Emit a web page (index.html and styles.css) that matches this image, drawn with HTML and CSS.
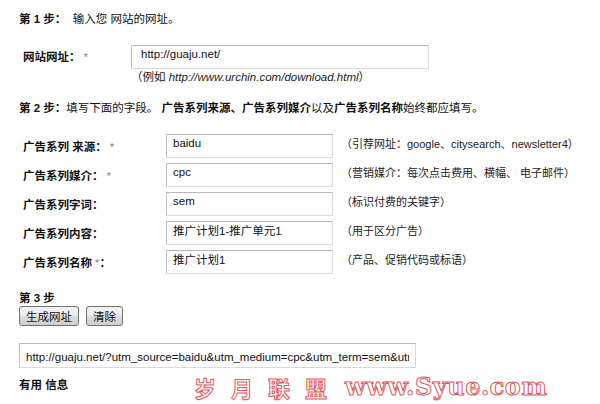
FILE: index.html
```html
<!DOCTYPE html>
<html lang="zh-CN">
<head>
  <meta charset="UTF-8">
  <title>网址构建工具</title>
  <link rel="stylesheet" href="styles.css">
</head>
<body>
  <div class="page">
    <!-- 第 1 步 -->
    <p class="step"><b>第 1 步：</b>&nbsp; 输入您 网站的网址。</p>

    <div class="url-row">
      <label class="label" for="site-url">网站网址：<span class="req">*</span></label>
      <input type="text" id="site-url" class="field url-field" value="http://guaju.net/">
      <span></span>
      <span class="example">（例如 <i>http://www.urchin.com/download.html</i>）</span>
    </div>

    <!-- 第 2 步 -->
    <p class="step step-2"><b>第 2 步：</b>填写下面的字段。 <b>广告系列来源、广告系列媒介</b>以及<b>广告系列名称</b>始终都应填写。</p>

    <div class="campaign">
      <label class="label">广告系列 来源：<span class="req">*</span></label>
      <input type="text" class="field" value="baidu">
      <span class="hint">（引荐网址：google、citysearch、newsletter4）</span>

      <label class="label">广告系列媒介：<span class="req">*</span></label>
      <input type="text" class="field" value="cpc">
      <span class="hint">（营销媒介：每次点击费用、横幅、 电子邮件）</span>

      <label class="label">广告系列字词：</label>
      <input type="text" class="field" value="sem">
      <span class="hint">（标识付费的关键字）</span>

      <label class="label">广告系列内容：</label>
      <input type="text" class="field" value="推广计划1-推广单元1">
      <span class="hint">（用于区分广告）</span>

      <label class="label">广告系列名称<span class="req">*</span>：</label>
      <input type="text" class="field" value="推广计划1">
      <span class="hint">（产品、促销代码或标语）</span>
    </div>

    <!-- 第 3 步 -->
    <p class="step step-3"><b>第 3 步</b></p>
    <div class="buttons">
      <button class="btn">生成网址</button>
      <button class="btn">清除</button>
    </div>

    <input type="text" class="field result" value="http://guaju.net/?utm_source=baidu&amp;utm_medium=cpc&amp;utm_term=sem&amp;utm_content=推广计划1-推广单元1&amp;utm_campaign=推广计划1">

    <p class="step info"><b>有用 信息</b></p>
  </div>

  <div class="watermark"><span class="wm-cn">岁 月 联 盟</span><span class="wm-en">www.Syue.com</span></div>
</body>
</html>
```

FILE: styles.css
```css
* {
  margin: 0;
  padding: 0;
  box-sizing: border-box;
}

html, body {
  height: 100%;
  overflow: hidden;
}

body {
  font-family: "Liberation Sans", Arial, "Noto Sans CJK SC", sans-serif;
  font-size: 11.5px;
  color: #111;
  background-color: #fff;
  position: relative;
}

.page {
  padding: 11px 19px 0;
}

.step {
  line-height: 16px;
  height: 16px;
  white-space: nowrap;
}

.step b {
  font-weight: bold;
}

.url-row {
  display: grid;
  grid-template-columns: 112px 298px;
  margin-top: 18px;
  align-items: center;
}

.label {
  font-weight: bold;
  padding-left: 4px;
  line-height: 16px;
  white-space: nowrap;
}

.req {
  font-weight: normal;
  color: #888;
  padding-left: 3px;
}

.field {
  display: block;
  height: 24px;
  padding: 0 6px 7px;
  font-family: "Liberation Sans", Arial, "Noto Sans CJK SC", sans-serif;
  font-size: 11.5px;
  color: #111;
  border: 1px solid;
  border-color: #b8b8b8 #dadada #dadada #c4c4c4;
  background-color: #fff;
  outline: none;
}

.url-field {
  padding: 0 9px 6px;
}

.example {
  line-height: 16px;
  color: #222;
  white-space: nowrap;
}

.example i {
  font-style: italic;
}

.step-2 {
  margin-top: 15px;
}

.campaign {
  display: grid;
  grid-template-columns: 139px 167px auto;
  grid-auto-rows: 24px;
  row-gap: 5px;
  column-gap: 8px;
  align-items: center;
  margin-top: 18px;
}

.campaign .label {
  padding-top: 2px;
}

.hint {
  color: #222;
  font-size: 11px;
  line-height: 16px;
  padding-bottom: 4px;
  white-space: nowrap;
}

.step-3 {
  margin-top: 17px;
  height: 14px;
  line-height: 14px;
}

.buttons {
  display: flex;
  gap: 7px;
  margin-top: 1px;
}

.btn {
  height: 20px;
  padding: 0 6px;
  font-family: "Liberation Sans", Arial, "Noto Sans CJK SC", sans-serif;
  font-size: 11.5px;
  color: #111;
  border: 1px solid #707070;
  border-radius: 3px;
  background: linear-gradient(to bottom, #f2f2f2 0%, #ebebeb 50%, #dddddd 51%, #cfcfcf 100%);
}

.result {
  width: 397px;
  height: 25px;
  margin-top: 17px;
  padding: 0 6px;
  overflow: hidden;
}

.info {
  margin-top: 9px;
}

/* 水印 */
.watermark {
  position: absolute;
  left: 194px;
  top: 373px;
  display: flex;
  align-items: center;
  color: #fff;
  -webkit-text-stroke: 1px #e0585a;
  font-weight: bold;
  white-space: nowrap;
}

.wm-cn {
  font-family: "Noto Sans CJK SC", sans-serif;
  font-size: 22px;
  line-height: 28px;
  word-spacing: 10px;
}

.wm-en {
  font-family: "DejaVu Serif", serif;
  font-size: 24px;
  line-height: 28px;
  margin-left: 18px;
  letter-spacing: 0.5px;
}
```
